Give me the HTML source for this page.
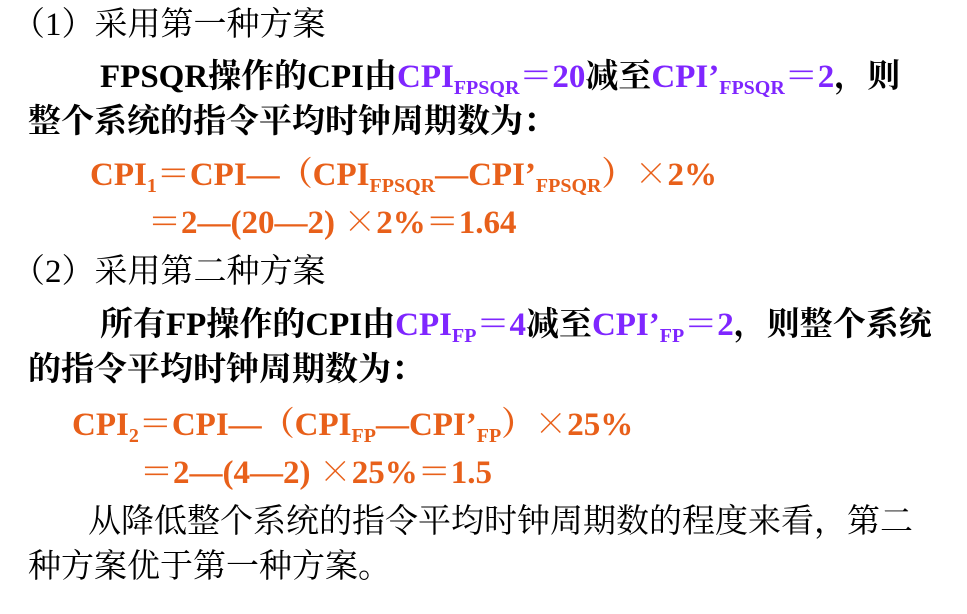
<!DOCTYPE html>
<html><head><meta charset="utf-8"><style>
html,body{margin:0;padding:0;background:#fff;width:967px;height:614px;overflow:hidden}
.l{position:absolute;white-space:nowrap;font-family:"Liberation Serif","Noto Serif CJK SC",serif;font-size:33px;line-height:40px;color:#000}
.b{font-weight:bold}
.p{color:#7F26FF;font-weight:bold}
.o{color:#E8601A;font-weight:bold}
.x{font-family:"Noto Serif CJK SC",serif;font-weight:normal}
sub{font-size:20px;vertical-align:-7px;line-height:0}
</style></head><body>
<div class="l" style="left:12px;top:5px">（1）采用第一种方案</div>
<div class="l b" style="left:100px;top:57px">FPSQR操作的CPI由<span class="p">CPI<sub>FPSQR</sub>＝20</span>减至<span class="p">CPI’<sub>FPSQR</sub>＝2</span>，则</div>
<div class="l b" style="left:28px;top:102px">整个系统的指令平均时钟周期数为：</div>
<div class="l o" style="left:90px;top:152px">CPI<sub>1</sub>＝CPI—（CPI<sub>FPSQR</sub>—CPI’<sub>FPSQR</sub>）<span class="x">×</span>2%</div>
<div class="l o" style="left:148px;top:200px">＝2—(20—2) <span class="x">×</span>2%＝1.64</div>
<div class="l" style="left:12px;top:252px">（2）采用第二种方案</div>
<div class="l b" style="left:100px;top:305px">所有FP操作的CPI由<span class="p">CPI<sub>FP</sub>＝4</span>减至<span class="p">CPI’<sub>FP</sub>＝2</span>，则整个系统</div>
<div class="l b" style="left:28px;top:350px">的指令平均时钟周期数为：</div>
<div class="l o" style="left:72px;top:402px">CPI<sub>2</sub>＝CPI—（CPI<sub>FP</sub>—CPI’<sub>FP</sub>）<span class="x">×</span>25%</div>
<div class="l o" style="left:140px;top:450px">＝2—(4—2) <span class="x">×</span>25%＝1.5</div>
<div class="l" style="left:88px;top:502px">从降低整个系统的指令平均时钟周期数的程度来看，第二</div>
<div class="l" style="left:28px;top:547px">种方案优于第一种方案。</div>
</body></html>
